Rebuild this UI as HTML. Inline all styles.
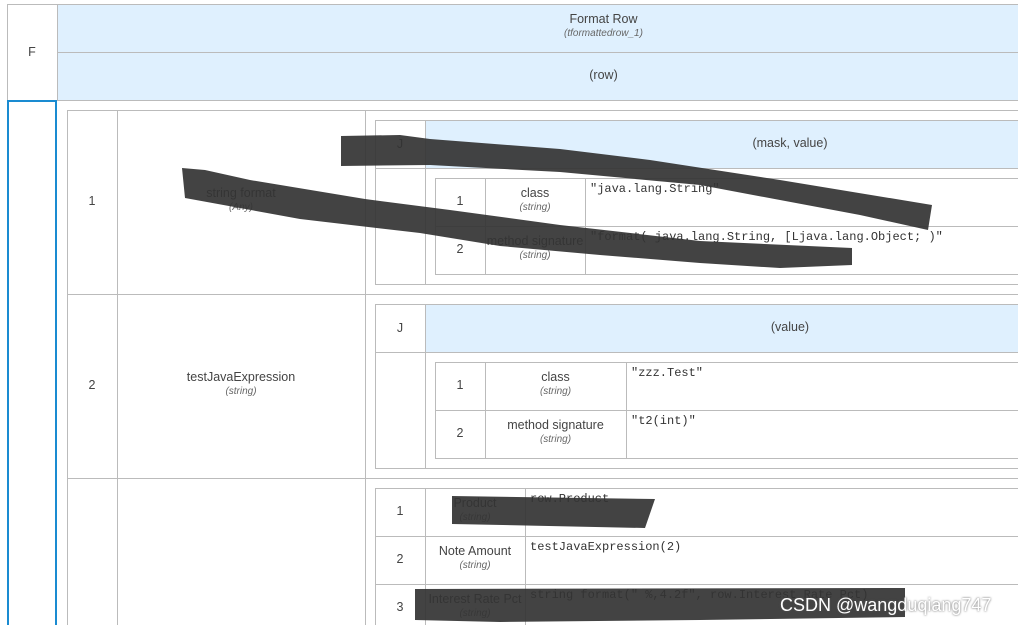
<!DOCTYPE html>
<html><head><meta charset="utf-8"><style>
html,body{margin:0;padding:0;overflow:hidden}
#w{position:relative;width:1018px;height:625px;overflow:hidden;background:#fff;font-family:"Liberation Sans",sans-serif;color:#444}
.b{position:absolute;box-sizing:border-box;border:1px solid #bbb}
.h{background:#dff0fe}
.t{position:absolute;font-size:12.5px;text-align:center;line-height:15px}
.t i{font-size:10px;color:#666;display:block;line-height:13px}
.m{position:absolute;font-family:"Liberation Mono",monospace;font-size:12px;color:#333}
.v{position:absolute;width:1px;background:#bbb}
.hl{position:absolute;height:1px;background:#bbb}
</style></head><body><div id="w">
<div class="b" style="left:7px;top:4px;width:1020px;height:97px"></div>
<div class="b h" style="left:57px;top:4px;width:970px;height:49px"></div>
<div class="b h" style="left:57px;top:52px;width:970px;height:49px"></div>
<div class="t" style="left:7px;top:45px;width:50px">F</div>
<div class="t" style="left:57px;top:12px;width:1093px">Format Row<i>(tformattedrow_1)</i></div>
<div class="t" style="left:57px;top:68px;width:1093px">(row)</div>
<div style="position:absolute;left:7px;top:100px;width:50px;height:530px;box-sizing:border-box;border:2px solid #1a8bd1"></div>
<div class="b" style="left:67px;top:110px;width:960px;height:530px"></div>
<div class="v" style="left:117px;top:110px;height:520px"></div>
<div class="v" style="left:365px;top:110px;height:520px"></div>
<div class="hl" style="left:67px;top:294px;width:960px"></div>
<div class="hl" style="left:67px;top:478px;width:960px"></div>
<div class="t" style="left:67px;top:194px;width:50px">1</div>
<div class="t" style="left:117px;top:186px;width:248px">string format<i>(Any)</i></div>
<div class="t" style="left:67px;top:378px;width:50px">2</div>
<div class="t" style="left:117px;top:370px;width:248px">testJavaExpression<i>(string)</i></div>
<div class="b" style="left:375px;top:120px;width:660px;height:165px"></div>
<div class="b h" style="left:425px;top:120px;width:610px;height:49px"></div>
<div class="v" style="left:425px;top:120px;height:165px"></div>
<div class="hl" style="left:375px;top:168px;width:660px"></div>
<div class="t" style="left:375px;top:137px;width:50px">J</div>
<div class="t" style="left:425px;top:136px;width:730px">(mask, value)</div>
<div class="b" style="left:435px;top:178px;width:600px;height:97px"></div>
<div class="v" style="left:485px;top:178px;height:97px"></div>
<div class="v" style="left:585px;top:178px;height:97px"></div>
<div class="hl" style="left:435px;top:226px;width:600px"></div>
<div class="t" style="left:435px;top:194px;width:50px">1</div>
<div class="t" style="left:485px;top:186px;width:100px">class<i>(string)</i></div>
<div class="t" style="left:435px;top:242px;width:50px">2</div>
<div class="t" style="left:475px;top:234px;width:120px;white-space:nowrap;overflow:hidden">method signature<i>(string)</i></div>
<div class="m" style="left:590px;top:182px">"java.lang.String"</div>
<div class="m" style="left:590px;top:230px">"format( java.lang.String, [Ljava.lang.Object; )"</div>
<div class="b" style="left:375px;top:304px;width:660px;height:165px"></div>
<div class="b h" style="left:425px;top:304px;width:610px;height:49px"></div>
<div class="v" style="left:425px;top:304px;height:165px"></div>
<div class="hl" style="left:375px;top:352px;width:660px"></div>
<div class="t" style="left:375px;top:321px;width:50px">J</div>
<div class="t" style="left:425px;top:320px;width:730px">(value)</div>
<div class="b" style="left:435px;top:362px;width:600px;height:97px"></div>
<div class="v" style="left:485px;top:362px;height:97px"></div>
<div class="v" style="left:626px;top:362px;height:97px"></div>
<div class="hl" style="left:435px;top:410px;width:600px"></div>
<div class="t" style="left:435px;top:378px;width:50px">1</div>
<div class="t" style="left:485px;top:370px;width:141px">class<i>(string)</i></div>
<div class="t" style="left:435px;top:426px;width:50px">2</div>
<div class="t" style="left:485px;top:418px;width:141px">method signature<i>(string)</i></div>
<div class="m" style="left:631px;top:366px">"zzz.Test"</div>
<div class="m" style="left:631px;top:414px">"t2(int)"</div>
<div class="b" style="left:375px;top:488px;width:660px;height:160px"></div>
<div class="v" style="left:425px;top:488px;height:140px"></div>
<div class="v" style="left:525px;top:488px;height:140px"></div>
<div class="hl" style="left:375px;top:536px;width:660px"></div>
<div class="hl" style="left:375px;top:584px;width:660px"></div>
<div class="t" style="left:375px;top:504px;width:50px">1</div>
<div class="t" style="left:425px;top:496px;width:100px">Product<i>(string)</i></div>
<div class="t" style="left:375px;top:552px;width:50px">2</div>
<div class="t" style="left:425px;top:544px;width:100px">Note Amount<i>(string)</i></div>
<div class="t" style="left:375px;top:600px;width:50px">3</div>
<div class="t" style="left:420px;top:592px;width:110px;white-space:nowrap">Interest Rate Pct<i>(string)</i></div>
<div class="m" style="left:530px;top:492px">row.Product</div>
<div class="m" style="left:530px;top:540px">testJavaExpression(2)</div>
<div class="m" style="left:530px;top:588px">string format(" %,4.2f", row.Interest Rate Pct)</div>
<svg width="1018" height="625" style="position:absolute;left:0;top:0" fill="#333" fill-opacity="0.92">
<polygon points="341,136 400,135 430,139 560,149 650,160 780,180 932,205 928,230 860,215 700,185 560,172 430,165 341,166"/>
<polygon points="182,168 205,170 250,180 365,199 450,210 560,225 700,241 852,248 852,265 780,268 700,263 600,255 500,246 420,233 300,219 185,198"/>
<polygon points="452,496 655,499 645,528 452,524"/>
<polygon points="415,589 905,588 905,617 700,620 500,622 415,620"/>
</svg>
<div style="position:absolute;left:780px;top:595px;font-size:18px;color:#fff;text-shadow:0 0 2px #555">CSDN @wangduqiang747</div>
</div></body></html>
